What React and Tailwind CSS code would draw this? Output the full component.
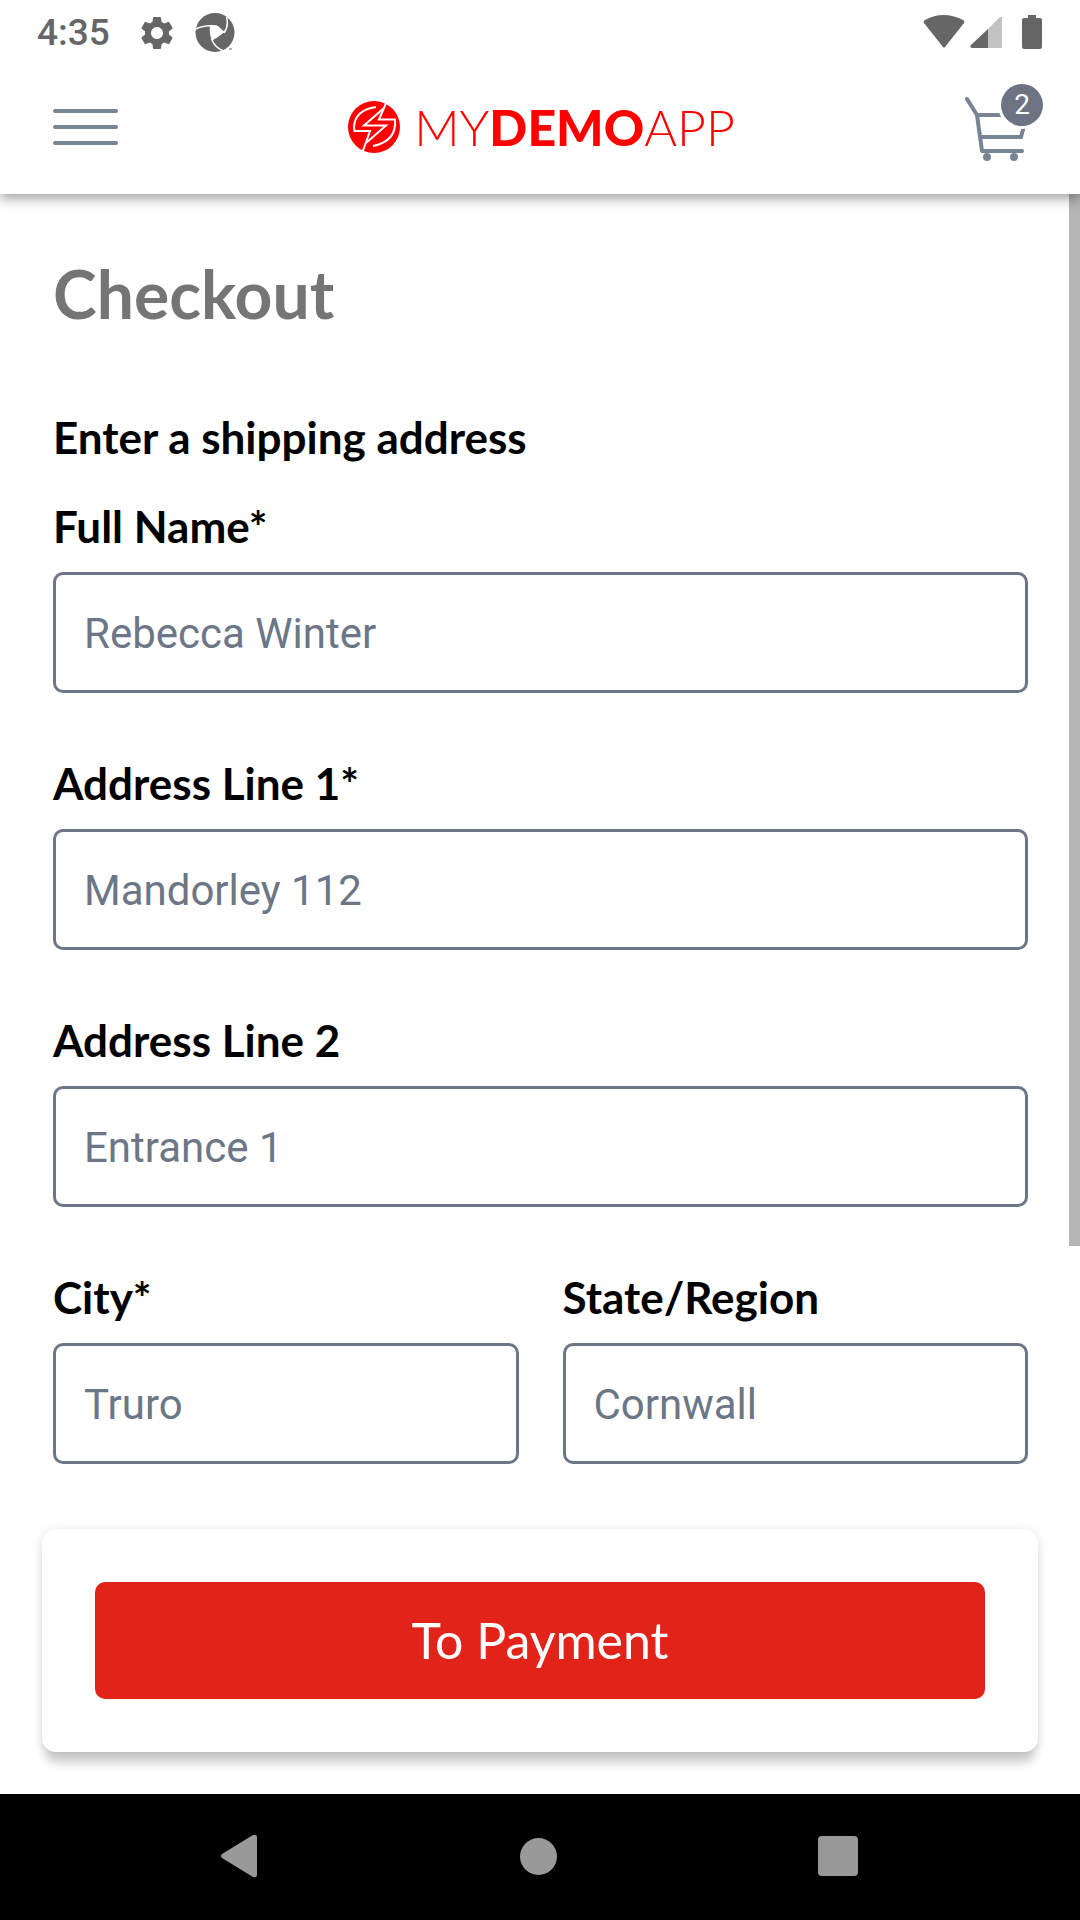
const LABEL = 'font-["Lato",sans-serif] text-[44px] leading-[50px] font-bold text-black';

function StatusBar() {
  return (
    <div className="flex h-[63px] items-center justify-between pr-[38px] pl-[37px] text-[#666]">
      <div className="flex items-center pt-[2px]">
        <span className='font-["Roboto",sans-serif] text-[37px] leading-[44px] font-medium'>4:35</span>
        <svg className="ml-[27px] size-10" viewBox="0 0 24 24" fill="currentColor" aria-hidden="true">
          <path d="M19.14 12.94c.04-.3.06-.61.06-.94 0-.32-.02-.64-.07-.94l2.03-1.58a.49.49 0 0 0 .12-.61l-1.92-3.32a.488.488 0 0 0-.59-.22l-2.39.96c-.5-.38-1.03-.7-1.62-.94l-.36-2.54a.484.484 0 0 0-.48-.41h-3.84c-.24 0-.43.17-.47.41l-.36 2.54c-.59.24-1.13.57-1.62.94l-2.39-.96c-.22-.08-.47 0-.59.22L2.74 8.87c-.12.21-.08.47.12.61l2.03 1.58c-.05.3-.09.63-.09.94s.02.64.07.94l-2.03 1.58a.49.49 0 0 0-.12.61l1.92 3.32c.12.22.37.29.59.22l2.39-.96c.5.38 1.03.7 1.62.94l.36 2.54c.05.24.24.41.48.41h3.84c.24 0 .44-.17.47-.41l.36-2.54c.59-.24 1.13-.56 1.62-.94l2.39.96c.22.08.47 0 .59-.22l1.92-3.32c.12-.22.07-.47-.12-.61l-2.01-1.58zM12 15.6c-1.98 0-3.6-1.62-3.6-3.6s1.62-3.6 3.6-3.6 3.6 1.62 3.6 3.6-1.62 3.6-3.6 3.6z" />
        </svg>
        <svg className="ml-[18px] size-10" viewBox="0 0 40 40" aria-hidden="true">
          <circle cx="20" cy="19.5" r="19.5" fill="currentColor" />
          <path d="M15 13 L23 13 L29.500 19 Q24 24 17 27.500 Q14 21 15 13 Z" fill="#fff" />
          <path d="M0 16.500 Q8 11.500 22 13 M31.500 4 Q34 13 29 20 M16.500 26 Q20 35 29 38" fill="none" stroke="#fff" strokeWidth="1.500" />
          <path d="M26 38.500 L32.500 36 L34 40 H26 Z" fill="#fff" />
          <path d="M34 36 H37" stroke="currentColor" strokeWidth="1" />
        </svg>
      </div>
      <div className="flex items-center">
        <svg className="h-9 w-[42px]" viewBox="0 0 42 36" fill="currentColor" aria-hidden="true">
          <path d="M1 9 Q0 7 2 6 Q20 -4 40 6 Q42 7 41 9 L22 33 Q21 34 20 33 Z" />
        </svg>
        <svg className="ml-[5px] h-9 w-8" viewBox="0 0 32 36" fill="currentColor" aria-hidden="true">
          <path d="M18 15 V34 H2 Q-1 33 1 31 Z" />
          <path d="M18 15 L30 3 Q32 2 32 4 V33 Q32 34 31 34 H18 Z" opacity="0.4" />
        </svg>
        <svg className="ml-5 h-9 w-5" viewBox="0 0 20 36" fill="currentColor" aria-hidden="true">
          <path d="M6 1 H14 V4 H18 Q20 4 20 6 V33 Q20 35 18 35 H2 Q0 35 0 33 V6 Q0 4 2 4 H6 Z" />
        </svg>
      </div>
    </div>
  );
}

function AppHeader() {
  return (
    <header className="relative z-10 bg-white shadow-[0_4px_12px_rgba(0,0,0,0.4)]">
      <StatusBar />
      <div className="flex h-[131px] items-center justify-between pr-[37px] pb-[4px] pl-[53px]">
        <button type="button" aria-label="Open menu" className="flex w-[65px] flex-col gap-3">
          <span className="h-1 rounded-full bg-[#788494]" />
          <span className="h-1 rounded-full bg-[#788494]" />
          <span className="h-1 rounded-full bg-[#788494]" />
        </button>
        <div className="flex items-center gap-[14px] text-[#f00]">
          <svg className="size-[52px]" viewBox="0 0 52 52" aria-hidden="true">
            <circle cx="26" cy="26" r="26" fill="currentColor" />
            <g fill="none" stroke="#fff" strokeWidth="2">
              <path d="M28 6 Q7 9 6 26 L6.500 30 H22 L14.500 51" />
              <path d="M38.500 1 L31 18.500 H47 Q49 40 25 45" />
              <path d="M36 7 L16 24.500 H38 L18 42" />
            </g>
          </svg>
          <span className='font-["Lato",sans-serif] text-[50px] leading-[56px] font-light'>
            MY<b className="font-black">DEMO</b>APP
          </span>
        </div>
        <button type="button" aria-label="Cart, 2 items" className="relative w-[78px] pb-2">
          <svg className="w-full" viewBox="0 0 78 78" fill="none" stroke="#788494" strokeWidth="4" aria-hidden="true">
            <path d="M2 15 L12 31 L17 67 H57" strokeLinecap="round" strokeLinejoin="round" />
            <path d="M12 31 H62 L56 53 H15" />
            <circle cx="22" cy="73" r="4" fill="#788494" stroke="none" />
            <circle cx="49" cy="73" r="4" fill="#788494" stroke="none" />
          </svg>
          <span className='absolute top-0 right-0 flex size-[42px] items-center justify-center rounded-full bg-[#6c7484] font-["Roboto",sans-serif] text-[28px] text-white ring-3 ring-white'>
            2
          </span>
        </button>
      </div>
    </header>
  );
}

function Field({ id, label, placeholder }) {
  return (
    <div className="flex min-w-0 flex-1 flex-col gap-[21px]">
      <label htmlFor={id} className={LABEL}>
        {label}
      </label>
      <input
        id={id}
        type="text"
        placeholder={placeholder}
        className='h-[121px] w-full rounded-[10px] border-[3px] border-[#6c7686] bg-white px-[28px] pt-[2px] font-["Roboto",sans-serif] text-[42px] text-black placeholder:text-[#6c7686]'
      />
    </div>
  );
}

function NavBar() {
  return (
    <nav
      aria-label="System"
      className="grid h-[126px] grid-cols-3 place-items-center bg-black pr-[92px] pb-[2px] pl-[90px] text-[#999]"
    >
      <button type="button" aria-label="Back">
        <svg className="size-11" viewBox="0 0 44 44" fill="currentColor">
          <path d="M4 20 Q2 22 4 24 L35 43 Q39 44 39 41 V3 Q39 0 35 1 Z" />
        </svg>
      </button>
      <button type="button" aria-label="Home" className="size-[37px] rounded-full bg-[#999]" />
      <button type="button" aria-label="Recent apps" className="size-10 rounded-[4px] bg-[#999]" />
    </nav>
  );
}

export default function App() {
  return (
    <div className="flex min-h-screen flex-col bg-white">
      <AppHeader />
      <main className="relative flex flex-1 flex-col">
        <div className="absolute top-0 right-0 h-[1052px] w-[11px] bg-[#b5b5b5]" />
        <form className="flex flex-1 flex-col">
          <div className="flex flex-1 flex-col pt-[62px] pr-[52px] pl-[53px]">
            <h1 className='font-["Lato",sans-serif] text-[66px] leading-[76px] font-bold text-[#757575]'>Checkout</h1>
            <h2 className={LABEL + " mt-[80px]"}>
              Enter a shipping address
            </h2>
            <div className="mt-[39px] flex flex-col gap-[65px]">
              <Field id="name" label="Full Name*" placeholder="Rebecca Winter" />
              <Field id="line1" label="Address Line 1*" placeholder="Mandorley 112" />
              <Field id="line2" label="Address Line 2" placeholder="Entrance 1" />
              <div className="flex gap-11">
                <Field id="city" label="City*" placeholder="Truro" />
                <Field id="state" label="State/Region" placeholder="Cornwall" />
              </div>
            </div>
          </div>
          <div className="mx-[42px] mb-[42px] rounded-[14px] bg-white p-[53px] shadow-[0_16px_10px_-4px_rgba(0,0,0,0.15),0_3px_12px_rgba(0,0,0,0.15)]">
            <button
              type="submit"
              className='h-[117px] w-full rounded-[10px] bg-[#e2231a] font-["Lato",sans-serif] text-[50px] text-white'
            >
              To Payment
            </button>
          </div>
        </form>
      </main>
      <NavBar />
    </div>
  );
}
